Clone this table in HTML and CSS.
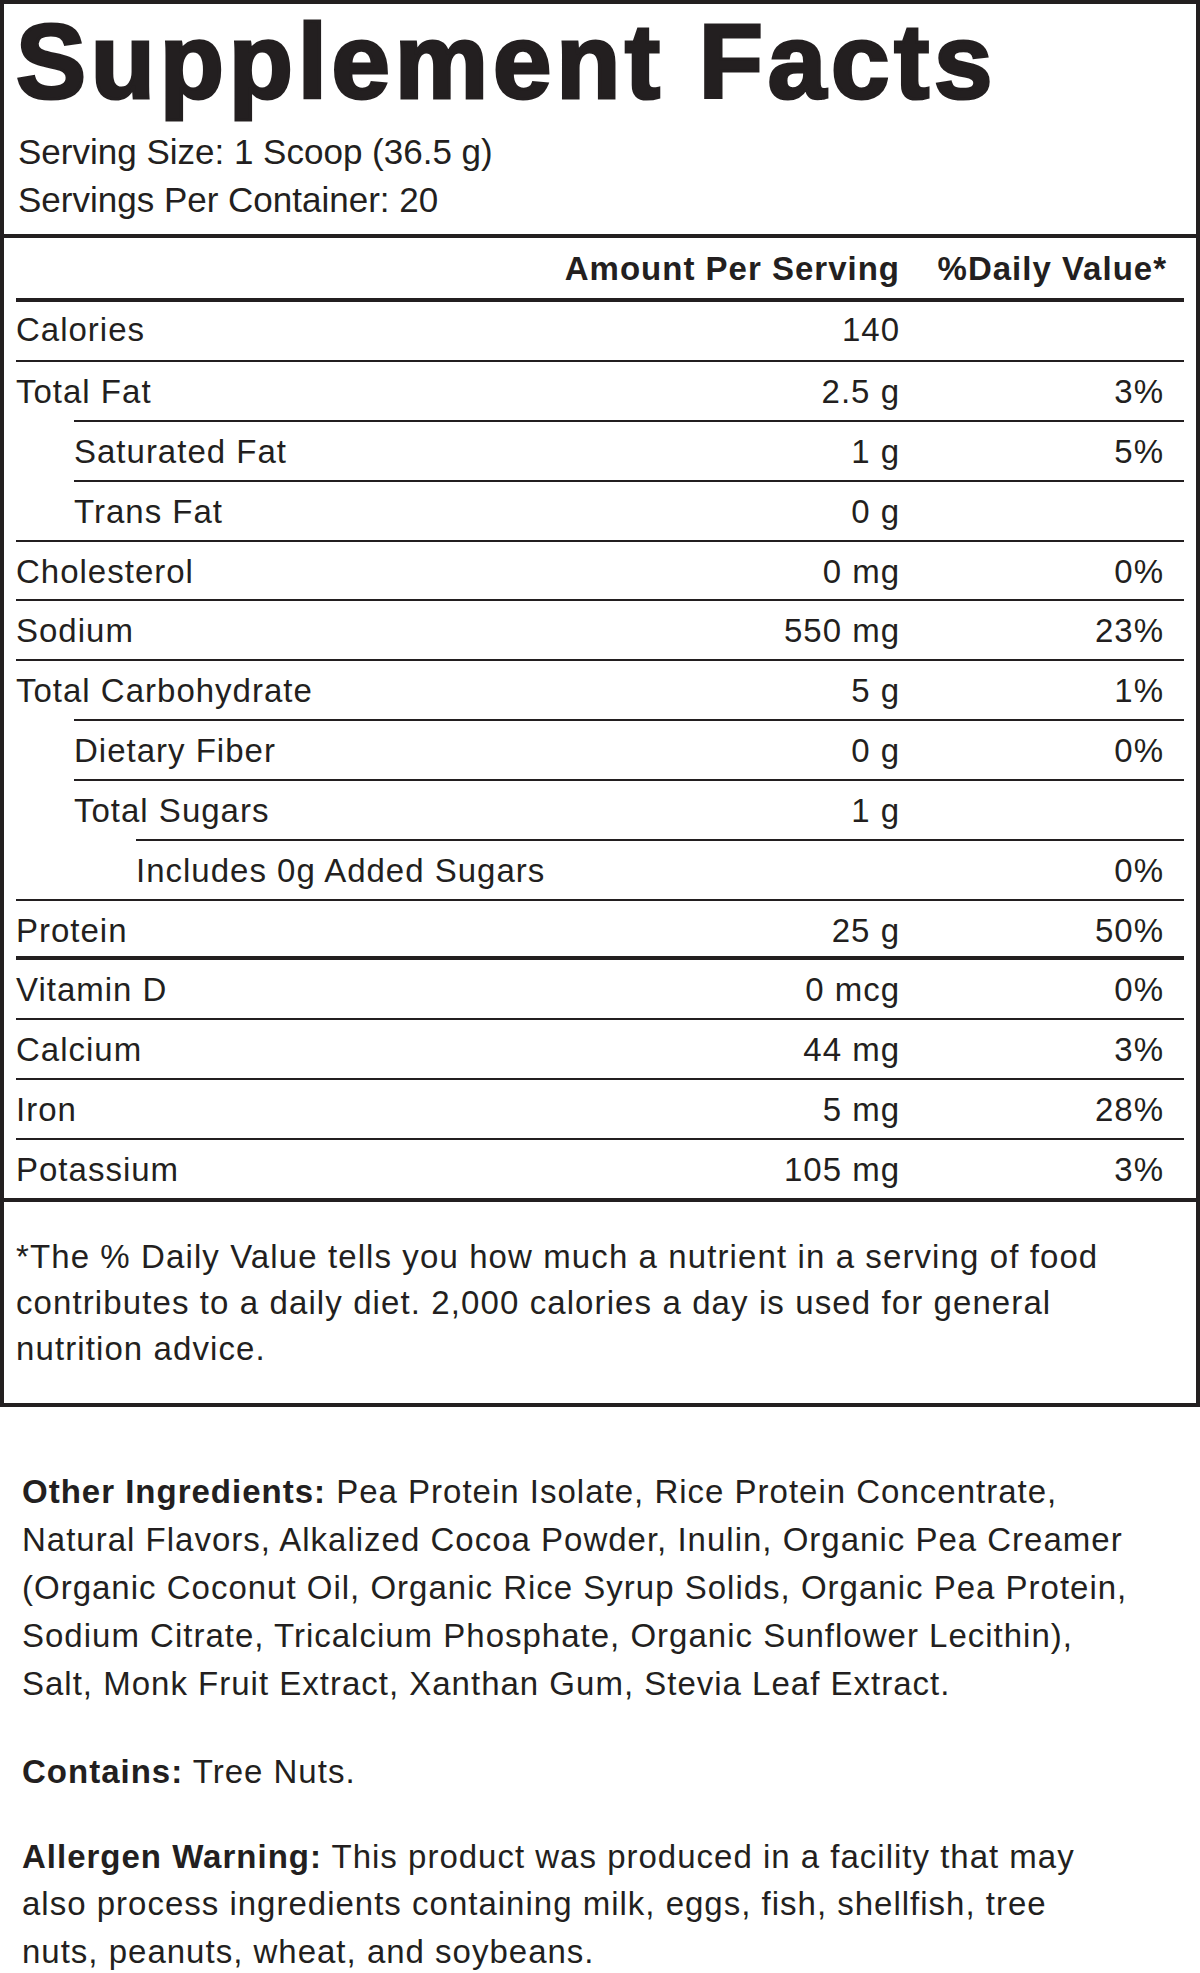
FILE: index.html
```html
<!DOCTYPE html>
<html lang="en">
<head>
<meta charset="utf-8">
<title>Supplement Facts</title>
<link rel="stylesheet" href="styles.css">
</head>
<body>
<div class="label">
  <div class="head">
    <h1 class="title">Supplement Facts</h1>
    <p class="serv">Serving Size: 1 Scoop (36.5 g)</p>
    <p class="serv">Servings Per Container: 20</p>
  </div>
  <div class="table">
    <div class="row hdr"><span class="name"></span><span class="amt">Amount Per Serving</span><span class="dv">%Daily Value*</span></div>
    <div class="row first"><span class="name">Calories</span><span class="amt">140</span><span class="dv"></span></div>
    <div class="row"><span class="name">Total Fat</span><span class="amt">2.5 g</span><span class="dv">3%</span></div>
    <div class="row ind1"><span class="name">Saturated Fat</span><span class="amt">1 g</span><span class="dv">5%</span></div>
    <div class="row ind1"><span class="name">Trans Fat</span><span class="amt">0 g</span><span class="dv"></span></div>
    <div class="row"><span class="name">Cholesterol</span><span class="amt">0 mg</span><span class="dv">0%</span></div>
    <div class="row"><span class="name">Sodium</span><span class="amt">550 mg</span><span class="dv">23%</span></div>
    <div class="row"><span class="name">Total Carbohydrate</span><span class="amt">5 g</span><span class="dv">1%</span></div>
    <div class="row ind1"><span class="name">Dietary Fiber</span><span class="amt">0 g</span><span class="dv">0%</span></div>
    <div class="row ind1"><span class="name">Total Sugars</span><span class="amt">1 g</span><span class="dv"></span></div>
    <div class="row ind2"><span class="name">Includes 0g Added Sugars</span><span class="amt"></span><span class="dv">0%</span></div>
    <div class="row protein"><span class="name">Protein</span><span class="amt">25 g</span><span class="dv">50%</span></div>
    <div class="row thick"><span class="name">Vitamin D</span><span class="amt">0 mcg</span><span class="dv">0%</span></div>
    <div class="row"><span class="name">Calcium</span><span class="amt">44 mg</span><span class="dv">3%</span></div>
    <div class="row"><span class="name">Iron</span><span class="amt">5 mg</span><span class="dv">28%</span></div>
    <div class="row"><span class="name">Potassium</span><span class="amt">105 mg</span><span class="dv">3%</span></div>
  </div>
  <p class="foot">*The % Daily Value tells you how much a nutrient in a serving of food<br>contributes to a daily diet. 2,000 calories a day is used for general<br>nutrition advice.</p>
</div>
<div class="ingr">
  <p class="para other"><b>Other Ingredients:</b> Pea Protein Isolate, Rice Protein Concentrate,<br>Natural Flavors, Alkalized Cocoa Powder, Inulin, Organic Pea Creamer<br>(Organic Coconut Oil, Organic Rice Syrup Solids, Organic Pea Protein,<br>Sodium Citrate, Tricalcium Phosphate, Organic Sunflower Lecithin),<br>Salt, Monk Fruit Extract, Xanthan Gum, Stevia Leaf Extract.</p>
  <p class="para contains"><b>Contains:</b> Tree Nuts.</p>
  <p class="para allergen"><b>Allergen Warning:</b> This product was produced in a facility that may<br>also process ingredients containing milk, eggs, fish, shellfish, tree<br>nuts, peanuts, wheat, and soybeans.</p>
</div>
</body>
</html>
```
FILE: styles.css
```css
* { box-sizing: border-box; }

body {
  margin: 0;
  font-family: "Liberation Sans", Arial, Helvetica, sans-serif;
  color: #231f20;
  background: #ffffff;
}

.label {
  width: 1200px;
  border: 4px solid #231f20;
}

.head {
  padding: 5px 0 10px 0;
}

.title {
  margin: 0 0 14px 0;
  padding-left: 12px;
  font-size: 105px;
  line-height: 105px;
  font-weight: 700;
  letter-spacing: 4.8px;
  white-space: nowrap;
  -webkit-text-stroke: 3.2px #231f20;
}

.serv {
  margin: 0;
  padding-left: 14px;
  font-size: 35px;
  line-height: 48px;
  white-space: nowrap;
}

.table {
  border-top: 4px solid #231f20;
  padding: 0 12px;
  display: flex;
  flex-direction: column;
}

.row {
  display: flex;
  height: 59.85px;
  border-top: 2px solid #231f20;
  padding-top: 13px;
  font-size: 33px;
  line-height: 33px;
  letter-spacing: 1px;
  white-space: nowrap;
}

.row.hdr {
  height: 64px;
  border-top: 0;
  border-bottom: 4px solid #231f20;
  padding-top: 14px;
  font-weight: 700;
}

.row.hdr .dv { padding-right: 17px; }

.row.first {
  height: 58px;
  border-top: 0;
  padding-top: 11px;
}

.row.protein { height: 57.85px; }

.row.thick {
  border-top-width: 4px;
  height: 61.85px;
}

.ind1 { margin-left: 58px; }
.ind2 { margin-left: 120px; }

.name { flex: 1; }

.amt {
  width: 400px;
  text-align: right;
}

.dv {
  width: 284px;
  padding-right: 20px;
  text-align: right;
}

.foot {
  margin: 0;
  border-top: 4px solid #231f20;
  padding: 32.6px 12px 30.4px 12px;
  font-size: 33px;
  line-height: 46px;
  letter-spacing: 1.1px;
  white-space: nowrap;
}

.ingr {
  padding: 0 22px;
  font-size: 33px;
  letter-spacing: 1px;
}

.para {
  margin: 0;
  line-height: 48px;
  white-space: nowrap;
}

.para b { font-weight: 700; }

.other { margin-top: 61px; }
.contains { margin-top: 40px; }
.allergen { margin-top: 37px; line-height: 47.5px; }
```
